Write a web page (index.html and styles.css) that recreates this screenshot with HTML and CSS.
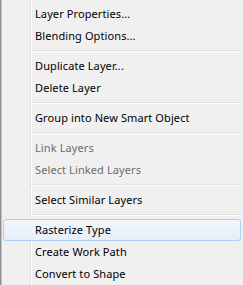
FILE: index.html
```html
<!DOCTYPE html>
<html>
<head>
<meta charset="utf-8">
<link rel="stylesheet" href="styles.css">
</head>
<body>
<div class="menu">
  <div class="item">Layer Properties...</div>
  <div class="item">Blending Options...</div>
  <div class="sep"></div>
  <div class="item">Duplicate Layer...</div>
  <div class="item">Delete Layer</div>
  <div class="sep"></div>
  <div class="item">Group into New Smart Object</div>
  <div class="sep"></div>
  <div class="item disabled">Link Layers</div>
  <div class="item disabled">Select Linked Layers</div>
  <div class="sep"></div>
  <div class="item">Select Similar Layers</div>
  <div class="sep"></div>
  <div class="item hover">Rasterize Type</div>
  <div class="item">Create Work Path</div>
  <div class="item">Convert to Shape</div>
</div>
</body>
</html>
```
FILE: styles.css
```css
html, body {
  margin: 0;
  padding: 0;
  background: #f0f0f0;
}
.menu {
  width: 242px;
  height: 285px;
  box-sizing: border-box;
  padding-top: 3px;
  border-left: 1px solid #8f8f8f;
  box-shadow: inset 1px 0 0 #c4c4c4;
  background-color: #f0f0f0;
  background-image: linear-gradient(to right, transparent 29px, #e2e3e3 29px, #e2e3e3 30px, #ffffff 30px, #ffffff 31px, transparent 31px);
  font-family: "Noto Sans", "Open Sans", sans-serif;
  font-size: 11px;
  letter-spacing: 0.1px;
  color: #000;
  overflow: hidden;
}
.item {
  height: 22px;
  line-height: 20px;
  box-sizing: border-box;
  margin: 0 1px 0 2px;
  border: 1px solid transparent;
  border-radius: 3px;
  padding-left: 31px;
  white-space: nowrap;
}
.item.disabled {
  color: #6d6d6d;
}
.item.hover {
  border-color: #aecff7;
  background: linear-gradient(#f2f6fc, #e5eefa);
}
.sep {
  height: 8px;
  margin-left: 30px;
  background: linear-gradient(to bottom, transparent 3px, #e0e0e0 3px, #e0e0e0 4px, #ffffff 4px, #ffffff 5px, transparent 5px);
}
```
